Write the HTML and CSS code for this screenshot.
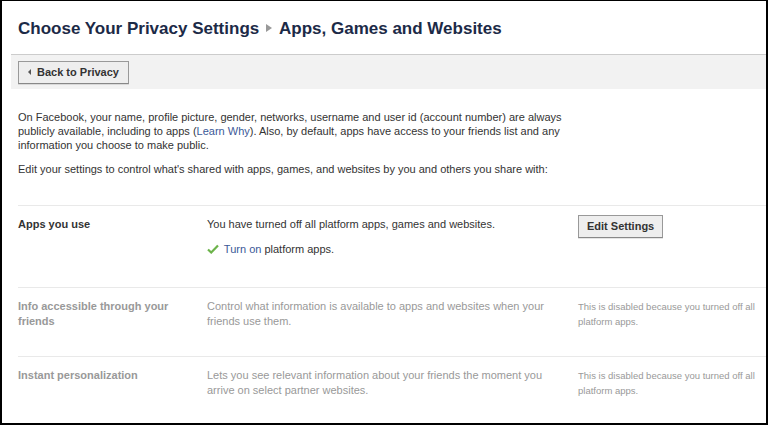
FILE: index.html
```html
<!DOCTYPE html>
<html lang="en">
<head>
    <meta charset="UTF-8">
    <title>Choose Your Privacy Settings</title>
    <link rel="stylesheet" href="styles.css">
</head>
<body>
    <div class="page">
        <h1 class="title">Choose Your Privacy Settings <span class="crumb-arrow"></span> Apps, Games and Websites</h1>

        <div class="toolbar">
            <button class="btn back"><span class="back-arrow"></span>Back to Privacy</button>
        </div>

        <div class="intro">
            <p>On Facebook, your name, profile picture, gender, networks, username and user id (account number) are always publicly available, including to apps (<a href="#">Learn Why</a>). Also, by default, apps have access to your friends list and any information you choose to make public.</p>
            <p>Edit your settings to control what's shared with apps, games, and websites by you and others you share with:</p>
        </div>

        <div class="settings">
            <div class="row">
                <div class="label">Apps you use</div>
                <div class="desc">
                    You have turned off all platform apps, games and websites.
                    <div class="turn-on">
                        <svg width="12" height="10" viewBox="0 0 12 10"><path d="M1 5.5 L4.2 8.5 L11 1.5" fill="none" stroke="#6cb34a" stroke-width="2.2"/></svg>
                        <a href="#">Turn on</a> platform apps.
                    </div>
                </div>
                <div class="action"><button class="btn">Edit Settings</button></div>
            </div>

            <div class="row disabled">
                <div class="label">Info accessible through your friends</div>
                <div class="desc">Control what information is available to apps and websites when your friends use them.</div>
                <div class="note">This is disabled because you turned off all platform apps.</div>
            </div>

            <div class="row disabled">
                <div class="label">Instant personalization</div>
                <div class="desc">Lets you see relevant information about your friends the moment you arrive on select partner websites.</div>
                <div class="note">This is disabled because you turned off all platform apps.</div>
            </div>
        </div>
    </div>
</body>
</html>
```

FILE: styles.css
```css
html, body {
    margin: 0;
    padding: 0;
    background-color: #ffffff;
}
body {
    font-family: "Liberation Sans", Arial, sans-serif;
    font-size: 11px;
    color: #333333;
}
.page {
    box-sizing: border-box;
    width: 768px;
    height: 425px;
    border: 2px solid #000000;
    border-top-width: 1px;
    overflow: hidden;
}
.title {
    margin: 0 0 0 9px;
    padding: 16px 0 14px 7px;
    font-size: 17px;
    font-weight: bold;
    color: #1c2a47;
    line-height: 23px;
    border-bottom: 1px solid #cccccc;
}
.crumb-arrow {
    display: inline-block;
    width: 0;
    height: 0;
    border-left: 6px solid #999999;
    border-top: 4px solid transparent;
    border-bottom: 4px solid transparent;
    margin: 0 3px 2px 2px;
}
.toolbar {
    margin-left: 9px;
    background-color: #f2f2f2;
    padding: 6px 7px 5px;
}
.btn {
    font-family: "Liberation Sans", Arial, sans-serif;
    font-size: 11px;
    font-weight: bold;
    color: #333333;
    background-color: #eeeeee;
    border: 1px solid #999999;
    border-bottom-color: #888888;
    box-shadow: 0 1px 0 rgba(0, 0, 0, 0.1);
    padding: 4px 8px;
    line-height: 13px;
    cursor: pointer;
}
.back {
    padding-left: 9px;
    padding-right: 9px;
}
.back-arrow {
    display: inline-block;
    width: 0;
    height: 0;
    border-right: 3px solid #555555;
    border-top: 3px solid transparent;
    border-bottom: 3px solid transparent;
    margin: 0 6px 1px 0;
}
.intro {
    padding: 21px 0 0 16px;
    width: 550px;
}
.intro p {
    margin: 0 0 10px;
    line-height: 14px;
}
a {
    color: #3b5998;
    text-decoration: none;
}
.settings {
    margin: 29px 0 0 16px;
}
.row {
    display: flex;
    border-top: 1px solid #e9e9e9;
    padding: 11px 0 0;
    line-height: 15px;
}
.row:first-child {
    height: 70px;
}
.row.disabled {
    height: 57px;
}
.label {
    width: 160px;
    padding-right: 29px;
    font-weight: bold;
}
.desc {
    width: 355px;
    padding-right: 16px;
}
.turn-on {
    margin-top: 10px;
}
.turn-on svg {
    vertical-align: -1px;
    margin-right: 2px;
}
.action .btn {
    margin-top: -2px;
}
.note {
    width: 185px;
    font-size: 9.5px;
    line-height: 15px;
    color: #999999;
}
.disabled .label,
.disabled .desc {
    color: #999999;
}
```
